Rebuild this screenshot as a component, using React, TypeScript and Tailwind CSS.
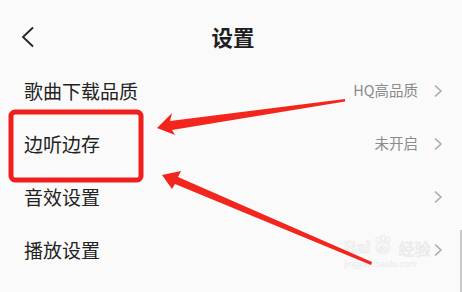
import React from "react";

const rows = [
  { label: "歌曲下载品质", value: "HQ高品质" },
  { label: "边听边存", value: "未开启" },
  { label: "音效设置", value: "" },
  { label: "播放设置", value: "" },
];

function Chevron() {
  return (
    <svg width="10" height="14" viewBox="0 0 10 14" className="shrink-0">
      <path d="M2 1.5 L8 7 L2 12.5" fill="none" stroke="#a8a8a8" strokeWidth="1.5" />
    </svg>
  );
}

export default function App() {
  return (
    <div
      className="relative w-[462px] h-[292px] overflow-hidden bg-[#fafafa]"
      style={{ fontFamily: '"Noto Sans CJK SC", "Noto Sans", sans-serif' }}
    >
      <div className="relative h-[64px] pt-[10px] flex items-center justify-center">
        <svg width="14" height="24" viewBox="0 0 14 24" className="absolute left-[21px] top-[26px]">
          <path d="M12 1.5 L2 11 L12 20.5" fill="none" stroke="#222" strokeWidth="1.8" />
        </svg>
        <span className="text-[21.5px] font-bold text-[#1e1e1e] leading-none ml-[4px]">设置</span>
      </div>
      <div className="flex flex-col">
        {rows.map((r) => (
          <div key={r.label} className="h-[53px] flex items-center pl-[24px] pr-[19px]">
            <span className="text-[19px] text-[#222] leading-none">{r.label}</span>
            <div className="ml-auto flex items-center gap-[15px]">
              {r.value && (
                <span className="text-[14.5px] text-[#8a8a8a] leading-none">{r.value}</span>
              )}
              <Chevron />
            </div>
          </div>
        ))}
      </div>

      {/* watermark */}
      <div className="absolute left-[344px] top-[234px] flex flex-col items-start opacity-40 pointer-events-none">
        <div className="flex items-end gap-[2px]">
          <span
            className="text-[17px] font-bold leading-none text-[#f4f4f4]"
            style={{ fontFamily: '"Liberation Sans", sans-serif', WebkitTextStroke: "0.6px #c8c8c8" }}
          >
            Bai
          </span>
          <svg width="22" height="22" viewBox="0 0 22 22">
            <g fill="#f4f4f4" stroke="#c8c8c8" strokeWidth="0.7">
              <ellipse cx="6" cy="6" rx="2.3" ry="3" />
              <ellipse cx="11" cy="4" rx="2.3" ry="3" />
              <ellipse cx="16" cy="6" rx="2.3" ry="3" />
              <ellipse cx="11" cy="14" rx="7" ry="6" />
            </g>
            <text x="11" y="18" textAnchor="middle" fontSize="9" fill="#c8c8c8" fontFamily="Liberation Sans">du</text>
          </svg>
          <span
            className="text-[16px] leading-none text-[#f4f4f4] ml-[2px]"
            style={{ WebkitTextStroke: "0.6px #c8c8c8" }}
          >
            经验
          </span>
        </div>
        <span
          className="text-[9px] leading-none mt-[4px] text-[#d0d0d0]"
          style={{ fontFamily: '"Liberation Sans", sans-serif' }}
        >
          jingyan.baidu.com
        </span>
      </div>

      <div className="absolute right-0 top-[230px] w-[2px] h-[62px] bg-[#c9c9c9]" />

      {/* annotations */}
      <svg className="absolute inset-0 pointer-events-none" width="462" height="292" viewBox="0 0 462 292">
        <rect x="11" y="112" width="130" height="68" rx="4" fill="none" stroke="#ee1f1d" strokeWidth="5" />
        <polygon
          points="157,128 172,113 170,121 345,99 345,101.5 172,130 175,135"
          fill="#f2261d"
        />
        <polygon
          points="162,175 181,171 178,177 372,262 371,265 175,184 172,189"
          fill="#f2261d"
        />
      </svg>
    </div>
  );
}
